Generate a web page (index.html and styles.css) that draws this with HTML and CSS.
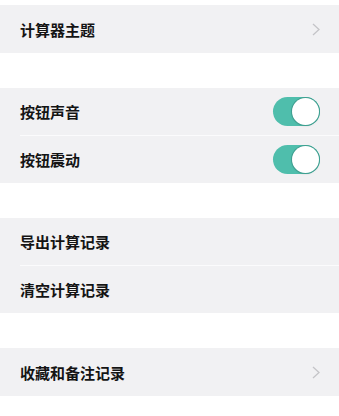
FILE: index.html
```html
<!DOCTYPE html>
<html lang="zh-CN">
<head>
    <meta charset="utf-8">
    <meta name="viewport" content="width=device-width, initial-scale=1.0">
    <title>设置</title>
    <link rel="stylesheet" href="styles.css">
</head>
<body>
    <div class="settings">
        <div class="group">
            <div class="row">
                <span class="label">计算器主题</span>
                <svg class="chevron" width="8" height="13" viewBox="0 0 8 13"><path d="M1 1l6 5.5L1 12" fill="none" stroke="#c4c4c8" stroke-width="1.3"/></svg>
            </div>
        </div>

        <div class="group">
            <div class="row">
                <span class="label">按钮声音</span>
                <span class="switch on"><span class="knob"></span></span>
            </div>
            <div class="row">
                <span class="label">按钮震动</span>
                <span class="switch on"><span class="knob"></span></span>
            </div>
        </div>

        <div class="group">
            <div class="row">
                <span class="label">导出计算记录</span>
            </div>
            <div class="row">
                <span class="label">清空计算记录</span>
            </div>
        </div>

        <div class="group">
            <div class="row">
                <span class="label">收藏和备注记录</span>
                <svg class="chevron" width="8" height="13" viewBox="0 0 8 13"><path d="M1 1l6 5.5L1 12" fill="none" stroke="#c4c4c8" stroke-width="1.3"/></svg>
            </div>
        </div>
    </div>
</body>
</html>
```

FILE: styles.css
```css
body {
    margin: 0;
    background: #fff;
    font-family: "Noto Sans CJK SC", "Noto Sans", sans-serif;
}
.settings {
    display: flex;
    flex-direction: column;
    gap: 35px;
    padding-top: 5px;
}
.group {
    background: #f1f1f3;
    display: flex;
    flex-direction: column;
}
.row {
    height: 48px;
    display: flex;
    align-items: center;
    justify-content: space-between;
    padding: 0 19px 0 20px;
    box-sizing: border-box;
    position: relative;
}
/* 2行のグループは 47 + 1 + 47 */
.row + .row {
    height: 48px;
    border-top: 1px solid #fbfbfc;
    margin-left: 20px;
    padding-left: 0;
}
.group .row:first-child:not(:last-child) {
    height: 47px;
}
.label {
    font-size: 15px;
    font-weight: 700;
    color: #141414;
    letter-spacing: 0;
}
.chevron {
    margin-right: 0;
}
.switch {
    width: 47px;
    height: 29px;
    border-radius: 15px;
    background: #4fbeac;
    display: flex;
    align-items: center;
    justify-content: flex-end;
    padding: 1px;
    box-sizing: border-box;
}
.knob {
    width: 27px;
    height: 27px;
    border-radius: 50%;
    background: #fff;
    box-shadow: 0 0 0 1px #3f9f90, 0 1px 2px rgba(0,0,0,0.15);
}
```
